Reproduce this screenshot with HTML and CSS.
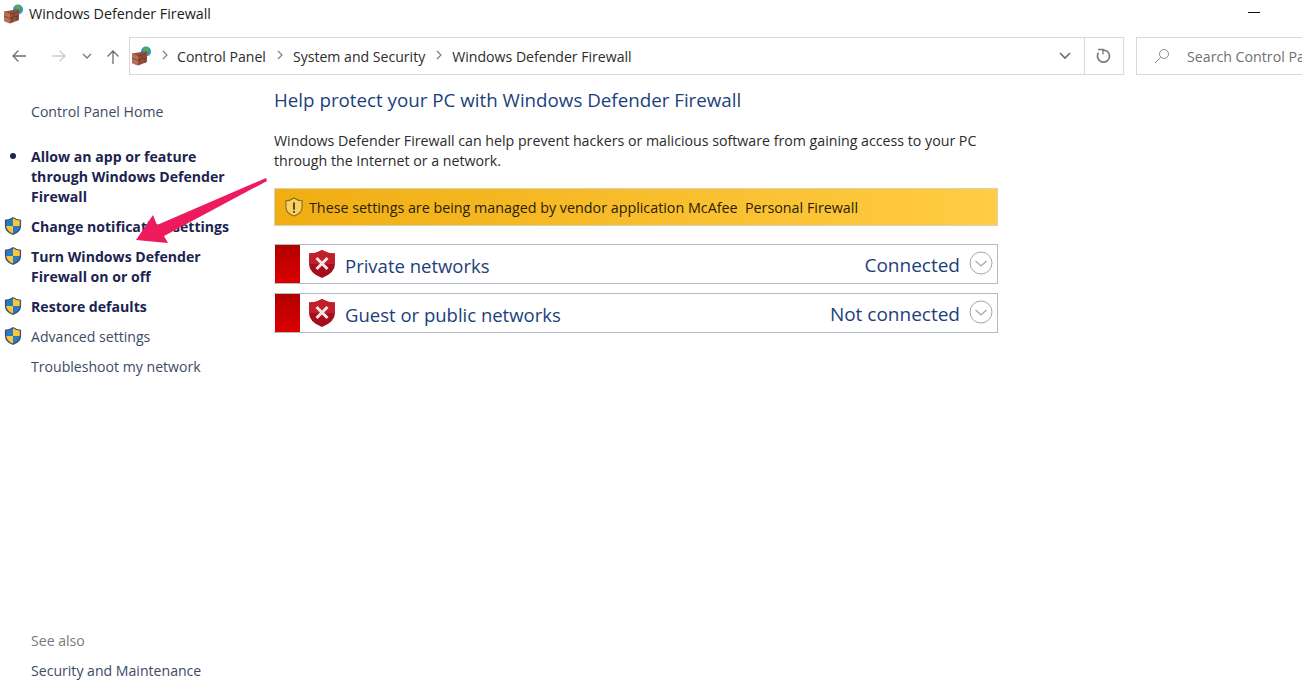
FILE: index.html
```html
<!DOCTYPE html>
<html lang="en">
<head>
<meta charset="utf-8">
<title>Windows Defender Firewall</title>
<link rel="stylesheet" href="styles.css">
</head>
<body>
<svg width="0" height="0" class="defs">
  <defs>
    <symbol id="fw" viewBox="0 0 20 20">
      <circle cx="14" cy="5.500" r="5" fill="#2f97bd"/>
      <path d="M11 2.500q3-2.500 6 0l-1 3-3.500.5z" fill="#55ad52"/>
      <path d="M0 7.500l15-2.500v11l-9 3.500-6-2.500z" fill="#96503a"/>
      <path d="M0 7.500l6 2.500v9.500l-6-2.500z" fill="#b9705a"/>
      <path d="M6 14l9-2.500M6 10l9-2.500M10 9v4M8 13.500v5M13 12v5M0 12l6 2.500" stroke="#6a3526" stroke-width=".7" fill="none"/>
    </symbol>
    <symbol id="uac" viewBox="0 0 20 22">
      <path d="M10 1q4 3 9 3v7q0 7-9 10Q1 18 1 11V4q5 0 9-3z" fill="#40506a"/>
      <path d="M10 2.500V11H2.500V5q4 0 7.500-2.500z" fill="#2a7ac4"/>
      <path d="M10 2.500q3.500 2.500 7.500 2.500v6H10z" fill="#f5c93a"/>
      <path d="M2.500 11H10v8.300q-7-2.500-7.500-8.300z" fill="#f5c93a"/>
      <path d="M10 11h7.500q-.5 5.800-7.500 8.300z" fill="#2a7ac4"/>
    </symbol>
    <symbol id="bad" viewBox="0 0 28 30">
      <path d="M14 1q6 3.500 13 3.500V15q0 9-13 14Q1 24 1 15V4.500Q8 4.500 14 1z" fill="#a50f1c"/>
      <path d="M14 1q6 3.500 13 3.500V15H1V4.500Q8 4.500 14 1z" fill="#c01f2c"/>
      <path d="M8.500 9l11 11M19.500 9l-11 11" stroke="#f6e4e4" stroke-width="3"/>
    </symbol>
    <symbol id="chev" viewBox="0 0 24 24">
      <circle cx="12" cy="12" r="11" fill="#fff" stroke="#a6a6a6"/>
      <path d="M6.500 10l5.500 5 5.500-5" fill="none" stroke="#a6a6a6" stroke-width="1.200"/>
    </symbol>
  </defs>
</svg>

<div class="window">
  <header class="titlebar">
    <svg class="title-icon"><use href="#fw"/></svg>
    <span class="title-text">Windows Defender Firewall</span>
    <span class="minimize"></span>
  </header>

  <nav class="toolbar">
    <div class="nav-buttons">
      <svg class="nav-icon back" viewBox="0 0 16 16"><path d="M15 8H2M7.500 2.500L2 8l5.500 5.500" fill="none" stroke="#6d6d6d" stroke-width="1.300"/></svg>
      <svg class="nav-icon fwd" viewBox="0 0 16 16"><path d="M1 8h13M8.500 2.500L14 8l-5.500 5.500" fill="none" stroke="#cdcdcd" stroke-width="1.300"/></svg>
      <svg class="nav-drop" viewBox="0 0 10 6"><path d="M1 1l4 4 4-4" fill="none" stroke="#777" stroke-width="1.300"/></svg>
      <svg class="nav-icon up" viewBox="0 0 16 16"><path d="M8 15V2M2.500 7.500L8 2l5.500 5.500" fill="none" stroke="#6d6d6d" stroke-width="1.300"/></svg>
    </div>
    <div class="address">
      <svg class="addr-icon"><use href="#fw"/></svg>
      <svg class="crumb-sep" viewBox="0 0 6 10"><path d="M1 1l4 4-4 4" fill="none" stroke="#7a7a7a" stroke-width="1.100"/></svg>
      <span class="crumb">Control Panel</span>
      <svg class="crumb-sep" viewBox="0 0 6 10"><path d="M1 1l4 4-4 4" fill="none" stroke="#7a7a7a" stroke-width="1.100"/></svg>
      <span class="crumb">System and Security</span>
      <svg class="crumb-sep" viewBox="0 0 6 10"><path d="M1 1l4 4-4 4" fill="none" stroke="#7a7a7a" stroke-width="1.100"/></svg>
      <span class="crumb">Windows Defender Firewall</span>
      <span class="addr-space"></span>
      <svg class="addr-drop" viewBox="0 0 12 8"><path d="M1 1l5 5 5-5" fill="none" stroke="#6d6d6d" stroke-width="1.600"/></svg>
      <span class="refresh">
        <svg class="refresh-icon" viewBox="0 0 16 16"><path d="M6 2.300a6 6 0 1 1-3.500 2.500" fill="none" stroke="#7a7a7a" stroke-width="1.700"/><path d="M2 1.500h5v5" fill="none" stroke="#7a7a7a" stroke-width="1.300"/></svg>
      </span>
    </div>
    <div class="search">
      <svg class="search-icon" viewBox="0 0 16 16"><circle cx="10" cy="6" r="4.500" fill="none" stroke="#8c8c8c"/><path d="M6.700 9.300L1 15" stroke="#8c8c8c"/></svg>
      <span class="search-text">Search Control Panel</span>
    </div>
  </nav>

  <div class="body">
    <aside class="sidebar">
      <a class="side-link home">Control Panel Home</a>
      <ul class="tasks">
        <li class="task current"><span class="bullet"></span><a class="bold">Allow an app or feature through Windows Defender Firewall</a></li>
        <li class="task"><svg class="uac"><use href="#uac"/></svg><a class="bold">Change notification settings</a></li>
        <li class="task"><svg class="uac"><use href="#uac"/></svg><a class="bold">Turn Windows Defender Firewall on or off</a></li>
        <li class="task"><svg class="uac"><use href="#uac"/></svg><a class="bold">Restore defaults</a></li>
        <li class="task"><svg class="uac"><use href="#uac"/></svg><a class="side-link">Advanced settings</a></li>
        <li class="task"><a class="side-link">Troubleshoot my network</a></li>
      </ul>
      <div class="see-also">
        <div class="see-label">See also</div>
        <a class="side-link">Security and Maintenance</a>
      </div>
    </aside>

    <main class="content">
      <h1 class="heading">Help protect your PC with Windows Defender Firewall</h1>
      <p class="intro">Windows Defender Firewall can help prevent hackers or malicious software from gaining access to your PC through the Internet or a network.</p>
      <div class="banner">
        <svg class="warn" viewBox="0 0 20 22">
          <path d="M10 1q4 3 9 3v7q0 7-9 10Q1 18 1 11V4q5 0 9-3z" fill="#f8d163" stroke="#8a6a20" stroke-width="1.200"/>
          <path d="M10 6v8M10 15.500v2" stroke="#3a2a08" stroke-width="1.800"/>
        </svg>
        <span>These settings are being managed by vendor application McAfee&nbsp; Personal Firewall</span>
      </div>
      <section class="panel">
        <span class="panel-flag"></span>
        <svg class="shield"><use href="#bad"/></svg>
        <span class="panel-name">Private networks</span>
        <span class="panel-state">Connected</span>
        <svg class="chev"><use href="#chev"/></svg>
      </section>
      <section class="panel">
        <span class="panel-flag"></span>
        <svg class="shield"><use href="#bad"/></svg>
        <span class="panel-name">Guest or public networks</span>
        <span class="panel-state">Not connected</span>
        <svg class="chev"><use href="#chev"/></svg>
      </section>
    </main>
  </div>

  <svg class="arrow" viewBox="0 0 140 72" width="140" height="72">
    <path d="M133 3L134 6 31 61 35 68 3 65 20 40 24 50z" fill="#ee1a5e"/>
  </svg>
</div>
</body>
</html>
```
FILE: styles.css
```css
* { box-sizing: border-box; }
html, body { margin: 0; height: 100%; background: #fff; }
body { font-family: "Open Sans", "Noto Sans", "Liberation Sans", sans-serif; overflow: hidden; }
.defs { position: absolute; }
.window { position: relative; width: 1302px; height: 684px; overflow: hidden; }

.titlebar { display: flex; align-items: center; height: 27px; padding-left: 4px; }
.title-icon { width: 20px; height: 20px; }
.title-text { margin-left: 5px; font-size: 14.300px; color: #1c1c1c; }
.minimize { width: 12px; height: 1px; background: #111; margin-left: auto; margin-right: 42px; margin-top: -3px; }

.toolbar { display: flex; align-items: center; height: 38px; margin-top: 10px; }
.nav-buttons { display: flex; align-items: center; width: 129px; flex: none; padding-left: 11px; }
.nav-icon { width: 16px; height: 16px; flex: none; }
.fwd { margin-left: 24px; }
.nav-drop { width: 10px; height: 6px; margin-left: 15px; }
.up { margin-left: 13px; margin-top: 2px; }

.address { display: flex; align-items: center; width: 995px; height: 38px; border: 1px solid #d9d9d9; flex: none; padding-left: 2px; }
.addr-icon { width: 20px; height: 20px; flex: none; }
.crumb-sep { width: 6px; height: 10px; margin: -3px 10px 0 11px; flex: none; }
.addr-icon + .crumb-sep { margin-left: 10px; margin-right: 9px; }
.crumb { font-size: 14.100px; color: #2c2c2c; }
.addr-space { flex: 1; }
.addr-drop { width: 12px; height: 8px; margin-right: 13px; }
.refresh { display: flex; align-items: center; justify-content: center; width: 39px; height: 100%; border-left: 1px solid #d9d9d9; }
.refresh-icon { width: 16px; height: 16px; }

.search { display: flex; align-items: center; flex: none; width: 220px; height: 38px; margin-left: 12px; border: 1px solid #d9d9d9; padding-left: 17px; }
.search-icon { width: 16px; height: 16px; flex: none; }
.search-text { margin-left: 17px; font-size: 14.200px; color: #707070; white-space: nowrap; }

.body { display: flex; height: 609px; }
.sidebar { position: relative; width: 274px; flex: none; padding-top: 27px; font-size: 14.100px; line-height: 20px; }
.side-link { color: #3d4a66; }
.home { display: block; padding-left: 31px; }
.tasks { list-style: none; margin: 25px 0 0; padding: 0; }
.task { position: relative; padding: 0 40px 10px 31px; }
.bold { font-weight: 700; color: #1b2450; }
.bullet { position: absolute; left: 10px; top: 6px; width: 6px; height: 6px; border-radius: 50%; background: #1b2450; }
.uac { position: absolute; left: 4px; top: -1px; width: 18px; height: 20px; }
.see-also { position: absolute; left: 31px; bottom: 3px; }
.see-label { color: #7a7a7a; margin-bottom: 10px; }

.content { width: 724px; padding-top: 11px; }
.heading { margin: 0; font-size: 18.750px; font-weight: 400; line-height: 28px; color: #1c3f7c; white-space: nowrap; }
.intro { margin: 17px 0 0; font-size: 14.200px; line-height: 20px; color: #2b2b2b; }
.banner { display: flex; align-items: center; height: 38px; margin-top: 17px; padding-left: 10px; font-size: 14.300px; color: #2b2008; background: linear-gradient(90deg, #f0ae12, #ffcc44); border: 1px solid #d9d2b8; }
.warn { width: 18px; height: 20px; margin-right: 6px; flex: none; }
.panel { display: flex; align-items: center; height: 40px; margin-top: 9px; border: 1px solid #b4b9c9; border-left: none; }
.banner + .panel { margin-top: 18px; }
.panel-flag { width: 25px; height: 38px; margin-left: 1px; flex: none; background: linear-gradient(180deg, #b10000, #dc0000); }
.shield { width: 28px; height: 30px; margin-left: 8px; flex: none; }
.panel-name { margin-left: 9px; padding-top: 3px; font-size: 18.500px; color: #1c3f7c; }
.panel-state { margin-left: auto; padding-top: 2px; font-size: 19px; color: #1c3f7c; }
.chev { width: 24px; height: 24px; margin: -2px 4px 0 9px; flex: none; }

.arrow { position: absolute; left: 133px; top: 175px; }
```
